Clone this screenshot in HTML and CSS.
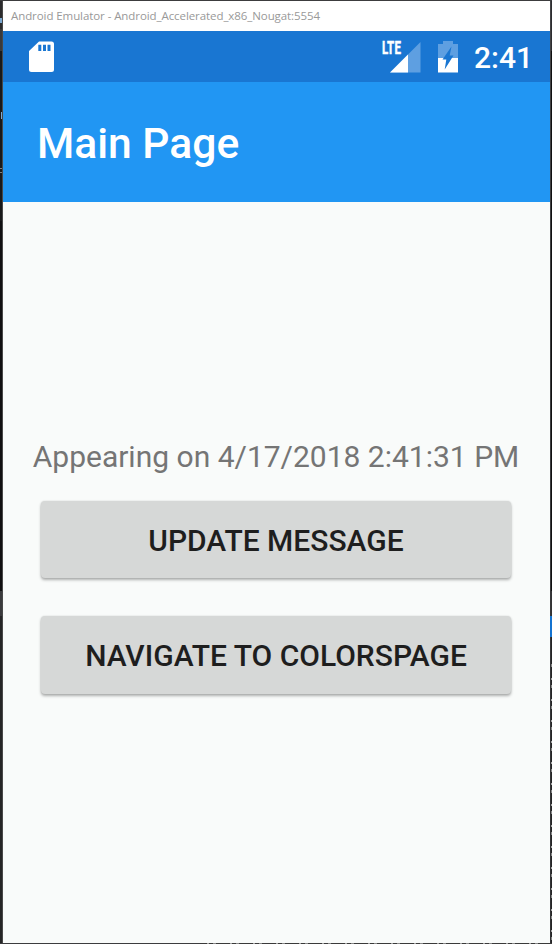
FILE: index.html
```html
<!DOCTYPE html>
<html lang="en">
<head>
<meta charset="utf-8">
<title>Android Emulator</title>
<link rel="stylesheet" href="styles.css">
</head>
<body>
<div class="desktop">
  <div class="edge-left"></div>
  <div class="window">
    <div class="titlebar"><span class="caption">Android Emulator - Android_Accelerated_x86_Nougat:5554</span></div>
    <div class="statusbar">
      <svg class="sd" width="26" height="32" viewBox="0 0 26 32"><path fill="#fff" fill-rule="evenodd" d="M10 .5H22.500Q25 .5 25 3V28.500Q25 31 22.500 31H2.500Q0 31 0 28.500V10ZM9.300 3.700V10h3V3.700ZM14 3.700V10h3V3.700ZM18.500 3.700V10h3V3.700Z"/></svg>
      <div class="signal">
        <span class="lte">LTE</span>
        <svg width="31" height="31" viewBox="0 0 31 31"><path fill="#5e9fe1" d="M30.500 0V30.500H0Z"/><path fill="#fff" d="M18 12.500V30.500H0Z"/></svg>
      </div>
      <svg class="battery" width="20" height="32" viewBox="0 0 20 32"><path fill="#5e9fe1" d="M5 0H15V3H20V17H0V3H5Z"/><path fill="#fff" d="M0 17H20V31.500H0Z"/><path fill="#1976d2" d="M13.500 5.500L11.700 14.500H15.500L6.700 28.500L8.300 18.500H4.500Z"/></svg>
      <span class="clock">2:41</span>
    </div>
    <header class="toolbar"><h1>Main Page</h1></header>
    <main class="page">
      <p class="message">Appearing on 4/17/2018 2:41:31 PM</p>
      <button class="action">UPDATE MESSAGE</button>
      <button class="action">NAVIGATE TO COLORSPAGE</button>
    </main>
  </div>
  <div class="edge-right"></div>
</div>
</body>
</html>
```
FILE: styles.css
```css
* { box-sizing: border-box; }
body { margin: 0; }
.desktop {
  display: grid;
  grid-template-columns: 3px 547px 2px;
  grid-template-rows: 942px;
  width: 552px;
  height: 944px;
  padding: 1px 0;
  background:
    repeating-linear-gradient(90deg, #3a3a3a 0 7px, #a0a0a0 7px 9px, #3a3a3a 9px 13px, #888 13px 16px, #3a3a3a 16px 23px) 200px 943px / 352px 1px no-repeat,
    #3c3c3e;
  overflow: hidden;
  font-family: Roboto, "Liberation Sans", sans-serif;
}
.edge-left {
  border-right: 1px solid #484848;
  background:
    linear-gradient(#7ba7cf, #7ba7cf) 0 17px / 2px 5px no-repeat,
    linear-gradient(#7ba7cf, #7ba7cf) 1px 111px / 1px 7px no-repeat,
    linear-gradient(#808080 0 1px, transparent 1px 4px, #808080 4px) 0 167px / 2px 5px no-repeat,
    linear-gradient(#2b2b2d 0 28px, #3a3a3c 28px 50px, #19191a 50px 220px, #101011 220px 590px, #3a3a3c 590px 615px, #252526 615px);
}
.edge-right {
  background:
    linear-gradient(#1473d0, #1473d0) 0 615px / 2px 21px no-repeat,
    linear-gradient(#444446, #333335) 0 0 / 1px 942px no-repeat,
    linear-gradient(#2d2d30 0 50px, #101011 50px 590px, #333335 590px 615px, #252526 615px 662px, transparent 662px),
    repeating-linear-gradient(#252526 0 5px, #a8a8a8 5px 7px, #252526 7px 12px, #888 12px 15px, #252526 15px 21px);
}
.window {
  display: flex;
  flex-direction: column;
  background: #f9fbfa;
}
.titlebar {
  flex: 0 0 30px;
  padding-left: 8px;
  background: #fff;
  color: #999;
  font: 11.5px/30px "Open Sans", "Noto Sans", sans-serif;
  letter-spacing: -.08px;
  white-space: nowrap;
}
.statusbar {
  display: flex;
  align-items: flex-start;
  flex: 0 0 51px;
  padding: 10px 0 0 26px;
  background: #1976d2;
  color: #fff;
}
.signal {
  position: relative;
  margin-left: 335px;
  padding: 1px 0 0;
}
.signal svg { display: block; }
.lte {
  position: absolute;
  left: -8px;
  top: -3px;
  font: 700 18.5px/20px Roboto, sans-serif;
  -webkit-text-stroke: .5px #fff;
  letter-spacing: .3px;
  transform: scaleX(.62);
  transform-origin: 0 0;
}
.battery { margin-left: 17px; }
.clock {
  margin-left: 16px;
  font-size: 30px;
  font-weight: 500;
  line-height: 34px;
}
.toolbar {
  display: flex;
  align-items: center;
  flex: 0 0 120px;
  padding: 1px 34px 0;
  background: #2196f3;
}
h1 {
  margin: 0;
  color: #fff;
  font-size: 42.6px;
  font-weight: 500;
  line-height: 60px;
}
.page {
  display: flex;
  flex-direction: column;
  padding: 235px 39px 0 38px;
}
.message {
  margin: 0 -30px 24px;
  color: #757575;
  font-size: 30px;
  line-height: 40px;
  text-align: center;
  white-space: nowrap;
}
.action {
  height: 77px;
  margin: 0 0 38px;
  padding: 2px 0 0;
  border: 0;
  border-radius: 4px;
  background: #d6d8d7;
  box-shadow: 0 2px 3px rgba(0, 0, 0, .3), 0 0 2px rgba(0, 0, 0, .12);
  color: #1e1e1e;
  font: 500 30px/40px Roboto, sans-serif;
}
.action:last-child { height: 78px; }
```
